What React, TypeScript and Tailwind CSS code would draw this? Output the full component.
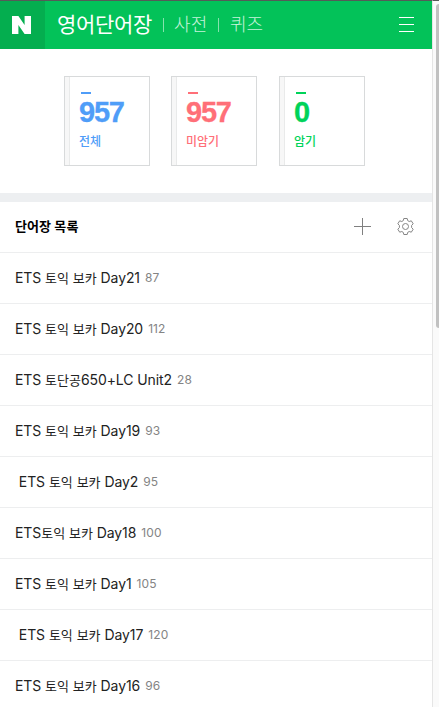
import { Fragment } from 'react';

const words = [
  { title: 'ETS 토익 보카 Day21', count: 87 },
  { title: 'ETS 토익 보카 Day20', count: 112 },
  { title: 'ETS 토단공650+LC Unit2', count: 28 },
  { title: 'ETS 토익 보카 Day19', count: 93 },
  { title: ' ETS 토익 보카 Day2', count: 95 },
  { title: 'ETS토익 보카 Day18', count: 100 },
  { title: 'ETS 토익 보카 Day1', count: 105 },
  { title: ' ETS 토익 보카 Day17', count: 120 },
  { title: 'ETS 토익 보카 Day16', count: 96 },
];

const stats = [
  { value: 957, label: '전체', text: 'text-[#4f9df8]', bar: 'bg-[#4f9df8]' },
  { value: 957, label: '미암기', text: 'text-[#ff6f78]', bar: 'bg-[#ff6f78]' },
  { value: 0, label: '암기', text: 'text-[#00d359]', bar: 'bg-[#00d359]' },
];

// Hangul runs are set slightly smaller than the Latin text around them.
function Mixed({ text }: { text: string }) {
  return (
    <>
      {text.split(/([가-힣]+)/).map((part, i) =>
        i % 2 ? (
          <span key={i} className="text-[13px] tracking-normal">{part}</span>
        ) : (
          <Fragment key={i}>{part}</Fragment>
        ),
      )}
    </>
  );
}

function Header() {
  return (
    <header className="flex h-[49px] items-stretch border-t border-[#555b58] bg-[#03c259]">
      <div className="flex w-[45px] items-center justify-center bg-[#04ae4f]">
        <svg width="19" height="18" viewBox="0 0 19 18" className="-ml-[2px]" fill="#fff">
          <path d="M0 0h6.4l6.2 9V0H19v18h-6.4L6.4 9v9H0z" />
        </svg>
      </div>
      <nav className="flex flex-1 items-center pl-3 whitespace-nowrap text-white">
        <span className="w-[106px] text-[21px] tracking-[-0.3px]">영어단어장</span>
        <i className="h-[14px] w-px bg-[#86e2ae]" />
        <span className="w-[54px] pb-[2px] pl-[10px] text-[18px] font-light tracking-[0.1px] text-[#c5f2d9]">사전</span>
        <i className="h-[14px] w-px bg-[#86e2ae]" />
        <span className="pb-[2px] pl-[11px] text-[18px] font-light text-[#c5f2d9]">퀴즈</span>
      </nav>
      <div className="mt-4 mr-[18px] flex w-[15px] flex-col gap-[6px]">
        <i className="h-px bg-white" />
        <i className="h-px bg-white" />
        <i className="h-px bg-white" />
      </div>
    </header>
  );
}

export default function App() {
  return (
    <div className="flex h-[707px] w-[439px] overflow-hidden bg-white font-['Inter','Noto_Sans_CJK_KR',sans-serif]">
      <main className="h-full w-[432px] overflow-hidden">
        <Header />
        <section className="grid h-[144px] grid-cols-[107px_108px_86px] pt-[27px] pl-16">
          {stats.map((s) => (
            <div key={s.label} className="flex h-[90px] w-[86px] border border-[#d8dadb]">
              <div className="w-[5px] border-r border-[#e9eaea] bg-[#f7f7f7]" />
              <div className={`pt-[15px] pl-[9px] ${s.text}`}>
                <div className={`ml-[2px] h-[2px] w-[10px] ${s.bar}`} />
                <div className="mt-[2px] h-[30px] font-['Liberation_Sans',sans-serif] text-[29px] leading-[32px] font-bold tracking-[-1.2px] [-webkit-text-stroke:0.3px_currentColor]">{s.value}</div>
                <div className="mt-[8px] text-[12px] leading-[16px] font-medium">{s.label}</div>
              </div>
            </div>
          ))}
        </section>
        <div className="h-[9px] bg-[#edeff1]" />
        <div className="flex h-[51px] items-center border-b border-[#edeeef] pr-[18px] pl-[15px]">
          <h2 className="flex-1 text-[13px] font-bold tracking-[0.1px] text-black">단어장 목록</h2>
          <svg width="17" height="17" viewBox="0 0 17 17" className="mr-[26px] mb-[2px]" stroke="#808080" strokeWidth="1">
            <path d="M8.5 0v17M0 8.5h17" />
          </svg>
          <svg width="17" height="17" viewBox="0 0 17 17" className="mb-[2px]" fill="none" stroke="#858585" strokeWidth="1" strokeLinejoin="round">
            <path d="M6.8.5h3.4l.5 2.1 1.5.9 2.1-.7 1.9 3-1.6 1.6v2.2l1.6 1.6-1.9 3-2.1-.7-1.5.9-.5 2.1H6.8l-.5-2.1-1.5-.9-2.1.7-1.9-3 1.6-1.6V7.4L.8 5.8l1.9-3 2.1.7 1.5-.9z" />
            <circle cx="8.5" cy="8.5" r="3" />
          </svg>
        </div>
        <ul>
          {words.map((w) => (
            <li key={w.title} className="flex h-[51px] items-center border-b border-[#edeeef] pl-[15px] whitespace-pre text-[#222]">
              <span className="text-[14px] leading-5 tracking-[-0.09px]"><Mixed text={w.title} /></span>
              <span className="ml-[5px] text-[12px] leading-5 tracking-[0.1px] text-[#848484]">{w.count}</span>
            </li>
          ))}
        </ul>
      </main>
      <aside className="w-[7px] border-t border-l border-t-[#555b58] border-l-[#e5e5e5] bg-[#fafafa] pt-[3px] pl-[3px]">
        <div className="h-[324px] rounded-l-[4px] bg-[#c1c1c1]" />
      </aside>
    </div>
  );
}
